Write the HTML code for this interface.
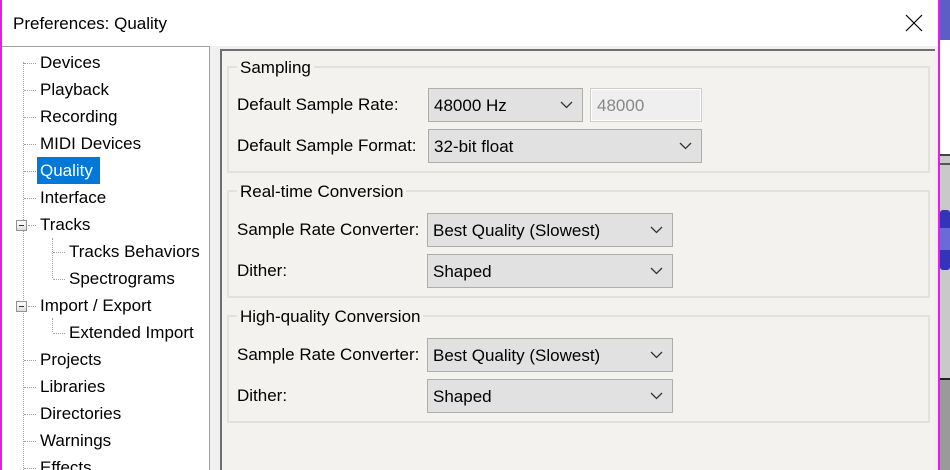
<!DOCTYPE html>
<html><head><style>
*{margin:0;padding:0;box-sizing:border-box}
html,body{width:950px;height:470px;overflow:hidden}
body{background:#f0f0f0;font-family:"Liberation Sans",sans-serif;font-size:17px;color:#000;position:relative}
.a{position:absolute}
.t{position:absolute;white-space:nowrap;line-height:20px}
.grp{position:absolute;border:2px solid #e2e1de;border-radius:1px}
.gl{position:absolute;background:#f3f2ef;padding:0 3px;line-height:20px;white-space:nowrap}
.cb{position:absolute;background:#e1e1e1;border:1px solid #adadad;line-height:33px;padding-left:5px;white-space:nowrap}
.cb svg{position:absolute;right:9px;top:12px}
.dl{position:absolute;border-top:1px dotted #a0a0a0;height:0}
.dv{position:absolute;border-left:1px dotted #a0a0a0;width:0}
.mb{position:absolute;width:11px;height:11px;border:1px solid #919191;background:linear-gradient(#fff,#dcdcdc)}
.mb:after{content:"";position:absolute;left:2px;top:4px;width:5px;height:1px;background:#333}
</style></head><body>
<div class="a" style="left:0;top:0;width:940px;height:46px;background:#fff"></div>
<div class="t" style="left:13px;top:14px;font-size:17px">Preferences: Quality</div>
<svg class="a" style="left:905px;top:14px" width="18" height="18"><path d="M1 1L17 17M17 1L1 17" stroke="#000" stroke-width="1.2"/></svg>
<div class="a" style="left:0;top:0;width:2px;height:470px;background:#e81ce8"></div>
<div class="a" style="left:938px;top:0;width:2px;height:470px;background:#e81ce8"></div>
<div class="a" style="left:940px;top:0;width:10px;height:470px;background:#c9c9c9"></div>
<div class="a" style="left:940px;top:0;width:10px;height:155px;background:#fff"></div>
<div class="a" style="left:940px;top:154px;width:10px;height:2px;background:#444"></div>
<div class="a" style="left:940px;top:163px;width:10px;height:2px;background:#555"></div>
<div class="a" style="left:940px;top:210px;width:10px;height:60px;background:#3434b8;border-radius:3px"></div>
<div class="a" style="left:940px;top:228px;width:10px;height:22px;background:#6a6ad8"></div>
<div class="a" style="left:940px;top:0;width:10px;height:40px;background:#3434b8;opacity:.8"></div>
<div class="a" style="left:940px;top:378px;width:10px;height:2px;background:#222"></div>
<div class="a" style="left:940px;top:380px;width:10px;height:90px;background:#9a9a9a"></div>
<!-- tree -->
<div class="a" style="left:2px;top:46px;width:208px;height:424px;background:#fff;border:1px solid #a0a0a0;border-bottom:none;border-left:none"></div>
<div class="dv" style="left:23px;top:62px;height:408px"></div>
<div class="dv" style="left:52px;top:238px;height:40px"></div>
<div class="dv" style="left:52px;top:318px;height:14px"></div>
<div class="dl" style="left:24px;top:63px;width:12px"></div>
<div class="dl" style="left:24px;top:90px;width:12px"></div>
<div class="dl" style="left:24px;top:117px;width:12px"></div>
<div class="dl" style="left:24px;top:144px;width:12px"></div>
<div class="dl" style="left:24px;top:171px;width:12px"></div>
<div class="dl" style="left:24px;top:198px;width:12px"></div>
<div class="dl" style="left:28px;top:225px;width:8px"></div>
<div class="dl" style="left:53px;top:252px;width:12px"></div>
<div class="dl" style="left:53px;top:279px;width:12px"></div>
<div class="dl" style="left:28px;top:306px;width:8px"></div>
<div class="dl" style="left:53px;top:333px;width:12px"></div>
<div class="dl" style="left:24px;top:360px;width:12px"></div>
<div class="dl" style="left:24px;top:387px;width:12px"></div>
<div class="dl" style="left:24px;top:414px;width:12px"></div>
<div class="dl" style="left:24px;top:441px;width:12px"></div>
<div class="dl" style="left:24px;top:468px;width:12px"></div>
<div class="mb" style="left:16px;top:220px"></div>
<div class="mb" style="left:16px;top:301px"></div>
<div class="a" style="left:37px;top:157px;width:63px;height:27px;background:#0078d7"></div>
<div class="t" style="left:40px;top:53px">Devices</div>
<div class="t" style="left:40px;top:80px">Playback</div>
<div class="t" style="left:40px;top:107px">Recording</div>
<div class="t" style="left:40px;top:134px">MIDI Devices</div>
<div class="t" style="left:40px;top:161px;color:#fff">Quality</div>
<div class="t" style="left:40px;top:188px">Interface</div>
<div class="t" style="left:40px;top:215px">Tracks</div>
<div class="t" style="left:69px;top:242px">Tracks Behaviors</div>
<div class="t" style="left:69px;top:269px">Spectrograms</div>
<div class="t" style="left:40px;top:296px">Import / Export</div>
<div class="t" style="left:69px;top:323px">Extended Import</div>
<div class="t" style="left:40px;top:350px">Projects</div>
<div class="t" style="left:40px;top:377px">Libraries</div>
<div class="t" style="left:40px;top:404px">Directories</div>
<div class="t" style="left:40px;top:431px">Warnings</div>
<div class="t" style="left:40px;top:458px">Effects</div>
<!-- content -->
<div class="a" style="left:220px;top:49px;width:715px;height:421px;background:#f3f2ef;border-top:2px solid #6e6e6e;border-left:2px solid #6e6e6e"></div>
<div class="grp" style="left:227px;top:66px;width:703px;height:107px"></div>
<div class="gl" style="left:237px;top:58px">Sampling</div>
<div class="t" style="left:237px;top:95px">Default Sample Rate:</div>
<div class="t" style="left:237px;top:136px">Default Sample Format:</div>
<div class="cb" style="left:428px;top:88px;width:155px;height:34px">48000 Hz<svg width="13" height="8"><path d="M1 1L6.5 6.5L12 1" stroke="#333" fill="none" stroke-width="1.3"/></svg></div>
<div class="a" style="left:590px;top:88px;width:112px;height:34px;background:#efefef;border:1px solid #ccc;box-shadow:inset 0 0 0 1px #fff;color:#888;line-height:33px;padding-left:6px">48000</div>
<div class="cb" style="left:428px;top:129px;width:274px;height:34px">32-bit float<svg width="13" height="8"><path d="M1 1L6.5 6.5L12 1" stroke="#333" fill="none" stroke-width="1.3"/></svg></div>
<div class="grp" style="left:227px;top:190px;width:703px;height:108px"></div>
<div class="gl" style="left:237px;top:182px">Real-time Conversion</div>
<div class="t" style="left:237px;top:220px">Sample Rate Converter:</div>
<div class="t" style="left:237px;top:261px">Dither:</div>
<div class="cb" style="left:427px;top:213px;width:246px;height:34px">Best Quality (Slowest)<svg width="13" height="8"><path d="M1 1L6.5 6.5L12 1" stroke="#333" fill="none" stroke-width="1.3"/></svg></div>
<div class="cb" style="left:427px;top:254px;width:246px;height:34px">Shaped<svg width="13" height="8"><path d="M1 1L6.5 6.5L12 1" stroke="#333" fill="none" stroke-width="1.3"/></svg></div>
<div class="grp" style="left:227px;top:315px;width:703px;height:108px"></div>
<div class="gl" style="left:237px;top:307px">High-quality Conversion</div>
<div class="t" style="left:237px;top:345px">Sample Rate Converter:</div>
<div class="t" style="left:237px;top:386px">Dither:</div>
<div class="cb" style="left:427px;top:338px;width:246px;height:34px">Best Quality (Slowest)<svg width="13" height="8"><path d="M1 1L6.5 6.5L12 1" stroke="#333" fill="none" stroke-width="1.3"/></svg></div>
<div class="cb" style="left:427px;top:379px;width:246px;height:34px">Shaped<svg width="13" height="8"><path d="M1 1L6.5 6.5L12 1" stroke="#333" fill="none" stroke-width="1.3"/></svg></div>
</body></html>
